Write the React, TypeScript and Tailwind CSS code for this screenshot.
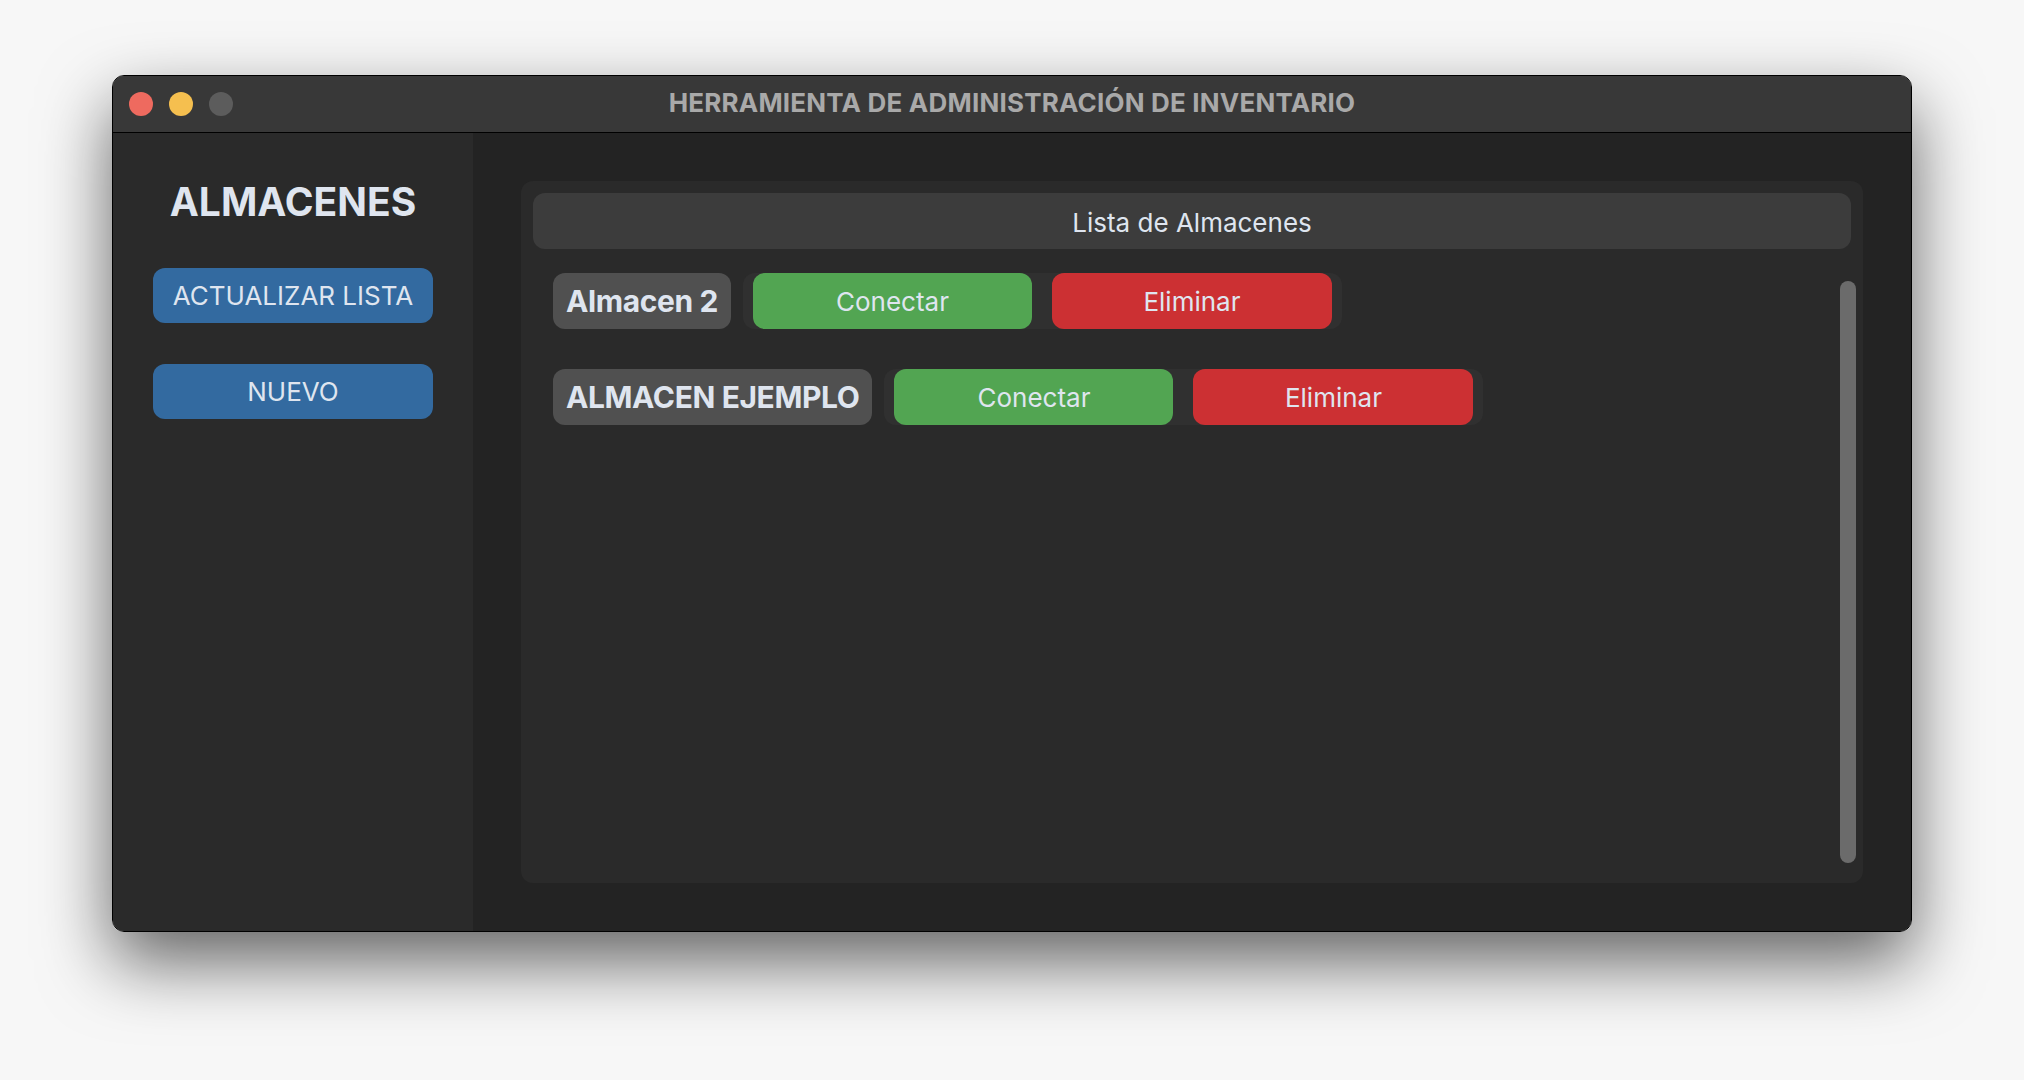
import React from 'react';

interface Almacen {
  nombre: string;
}

const almacenes: Almacen[] = [{ nombre: 'Almacen 2' }, { nombre: 'ALMACEN EJEMPLO' }];

const font = { fontFamily: 'Inter, "Noto Sans", sans-serif' };

const AlmacenRow: React.FC<{ almacen: Almacen }> = ({ almacen }) => (
  <div className="flex items-center gap-3 h-14">
    <div className="h-14 px-[13px] flex items-center rounded-xl bg-[#505050] text-[30px] font-bold text-[#dfe5ef] tracking-[-0.4px]">
      {almacen.nombre}
    </div>
    <div className="h-14 flex items-center gap-5 px-[10px] rounded-xl bg-[#303030]">
      <button className="h-14 w-[279px] rounded-xl bg-[#52a552] text-[26px] text-[#dfe5ef]">Conectar</button>
      <button className="h-14 w-[280px] rounded-xl bg-[#cc3033] text-[26px] text-[#dfe5ef]">Eliminar</button>
    </div>
  </div>
);

export default function App() {
  return (
    <div className="w-[2024px] h-[1080px] bg-[#f7f7f7] pl-[112px] pt-[75px]" style={font}>
      <div className="w-[1800px] h-[857px] flex flex-col rounded-[12px] overflow-hidden border border-black shadow-[0_30px_70px_rgba(0,0,0,0.6),inset_0_0_0_1px_#5a5a5a]">
        {/* title bar */}
        <div className="relative h-[57px] shrink-0 bg-[#383838] border-b border-black flex items-center justify-center pb-[4px]">
          <div className="absolute left-4 top-[16px] flex gap-4">
            <div className="w-6 h-6 rounded-full bg-[#ee6a5f]" />
            <div className="w-6 h-6 rounded-full bg-[#f5bf4f]" />
            <div className="w-6 h-6 rounded-full bg-[#5c5c5c]" />
          </div>
          <span className="text-[26px] font-bold text-[#a9a9a9] tracking-[0.2px]">
            HERRAMIENTA DE ADMINISTRACIÓN DE INVENTARIO
          </span>
        </div>

        <div className="flex flex-1 min-h-0">
          {/* sidebar */}
          <div className="w-[360px] shrink-0 bg-[#2a2a2a] flex flex-col items-center pt-[45px]">
            <h1 className="text-[39px] leading-[48px] font-bold text-[#dfe5ef]">ALMACENES</h1>
            <button className="mt-[42px] w-[280px] h-[55px] rounded-xl bg-[#336aa0] text-[26px] text-[#dfe5ef]">
              ACTUALIZAR LISTA
            </button>
            <button className="mt-[41px] w-[280px] h-[55px] rounded-xl bg-[#336aa0] text-[26px] text-[#dfe5ef]">
              NUEVO
            </button>
          </div>

          {/* main */}
          <div className="flex-1 bg-[#232323] p-12 flex">
            <div className="flex-1 rounded-xl bg-[#2a2a2a] p-3 flex flex-col">
              <div className="h-14 shrink-0 rounded-xl bg-[#3c3c3c] flex items-center justify-center text-[26px] text-[#dfe5ef] pt-[2px]">
                Lista de Almacenes
              </div>
              <div className="flex flex-1 min-h-0">
                <div className="flex-1 pl-5 pt-6 flex flex-col gap-10">
                  {almacenes.map(a => (
                    <AlmacenRow key={a.nombre} almacen={a} />
                  ))}
                </div>
                <div className="w-4 mt-8 mb-2 mr-[-5px] rounded-full bg-[#6b6b6b]" />
              </div>
            </div>
          </div>
        </div>
      </div>
    </div>
  );
}
